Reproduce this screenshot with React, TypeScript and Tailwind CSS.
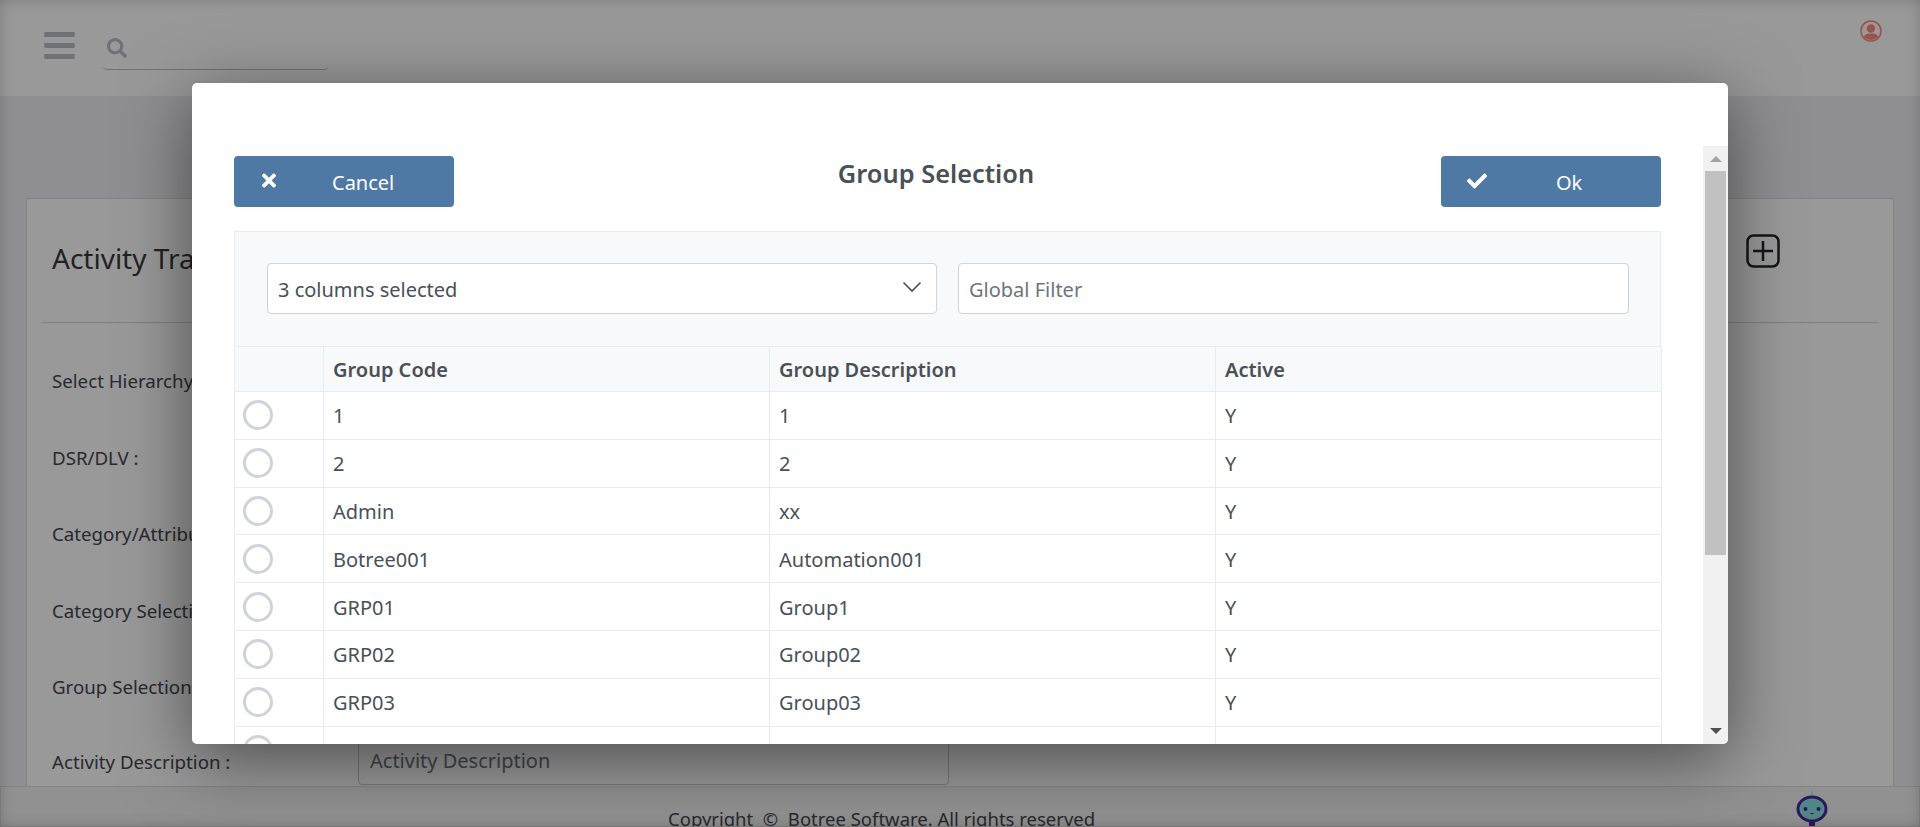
import React from "react";
import { FaBars, FaSearch, FaTimes, FaCheck } from "react-icons/fa";

const rows = [
  ["1", "1", "Y"],
  ["2", "2", "Y"],
  ["Admin", "xx", "Y"],
  ["Botree001", "Automation001", "Y"],
  ["GRP01", "Group1", "Y"],
  ["GRP02", "Group02", "Y"],
  ["GRP03", "Group03", "Y"],
  ["", "", ""],
];

const labels = [
  "Select Hierarchy :",
  "DSR/DLV :",
  "Category/Attribute :",
  "Category Selection :",
  "Group Selection :",
];

function UserIcon() {
  return (
    <svg viewBox="0 0 22 22" className="w-[22px] h-[22px]">
      <defs>
        <clipPath id="uc"><circle cx="11" cy="11" r="9" /></clipPath>
      </defs>
      <circle cx="11" cy="11" r="10" fill="none" stroke="#ff8d7c" strokeWidth="1.600" />
      <g clipPath="url(#uc)" fill="#ff8d7c">
        <circle cx="11" cy="8.500" r="4.200" />
        <path d="M2 22c0-6 3.500-8.500 9-8.500s9 2.500 9 8.500z" />
      </g>
    </svg>
  );
}

function BotIcon() {
  return (
    <svg viewBox="0 0 32 37" className="w-8 h-[37px]">
      <rect x="15.500" y="0" width="1" height="4" fill="#8be0e0" />
      <rect x="13" y="28" width="6" height="9" fill="#47289f" />
      <ellipse cx="16" cy="18" rx="15.500" ry="13.500" fill="#47289f" />
      <ellipse cx="16" cy="18" rx="12.500" ry="10.500" fill="#8be0e0" />
      <circle cx="9.500" cy="18" r="2" fill="#47289f" />
      <circle cx="22.500" cy="18" r="2" fill="#47289f" />
      <path d="M13.500 22c1.500 1.500 3.500 1.500 5 0z" fill="#47289f" />
    </svg>
  );
}

function Page() {
  return (
    <div className="h-[827px] flex flex-col bg-[#eeeef2] text-[#45454f]">
      <header className="h-[96px] shrink-0 bg-white flex items-start justify-between">
        <div className="flex items-start pl-[44px] pt-[33px]">
          <FaBars className="w-[31px] h-[35px] -mt-[5px] text-[#bcbcc8]" />
          <div className="ml-[28px] w-[225px] h-[37px] border-b border-[#bcbcc8] rounded-b-[4px] pl-[4px] pt-[5px]">
            <FaSearch className="w-[20px] h-[20px] text-[#bcbcc8]" />
          </div>
        </div>
        <div className="pt-[20px] pr-[38px]"><UserIcon /></div>
      </header>
      <main className="flex-1 min-h-0 pl-[26px] pt-[102px] pr-[26px] overflow-hidden">
        <div className="h-[600px] bg-white border border-[#dcdcdc] rounded-t-[3px] px-[15px]">
          <div className="h-[124px] border-b border-[#d4d4d4] flex items-center justify-between pb-[5px] pl-[10px] pr-[98px]">
            <h1 className="text-[28px] leading-none text-[#3a3a3a]">Activity Transaction</h1>
            <svg viewBox="0 0 34 34" className="w-[34px] h-[34px] -mt-[15px]" fill="none" stroke="#212529" strokeWidth="2.500">
              <rect x="1.500" y="1.500" width="31" height="31" rx="6" />
              <path d="M7 17h20M17 7v20" />
            </svg>
          </div>
          <div className="pl-[10px] pt-[45px]">
            {labels.map((l) => (
              <div key={l} className="h-[76.500px] text-[18.700px] leading-[26px]">{l}</div>
            ))}
            <div className="flex -mt-[12px]">
              <div className="w-[306px] text-[18.700px] leading-[26px] pt-[10px]">Activity Description :</div>
              <div className="w-[591px] h-[46px] border border-[#c6c8d0] rounded-[4px] px-[11px] pt-[8px] text-[20px] leading-[26px] text-[#6c757d]">Activity Description</div>
            </div>
          </div>
        </div>
      </main>
      <footer className="h-[41px] shrink-0 bg-[#f2f2f2] border border-[#dcdcdc] relative overflow-hidden pl-[667px]">
        <span className="block text-[18.500px] leading-[26px] pt-[19px] whitespace-nowrap">Copyright &nbsp;©&nbsp; Botree Software. All rights reserved</span>
        <div className="absolute left-[1795px] top-[4px]"><BotIcon /></div>
      </footer>
    </div>
  );
}

function Scrollbar() {
  return (
    <div className="w-[25px] mt-[63px] bg-[#f1f1f1] flex flex-col items-center shrink-0">
      <div className="h-[25px] flex items-center justify-center">
        <div className="w-0 h-0 border-x-[6px] border-x-transparent border-b-[6px] border-b-[#a3a3a3]" />
      </div>
      <div className="w-[21px] h-[384px] bg-[#c1c1c1]" />
      <div className="flex-1" />
      <div className="h-[25px] flex items-center justify-center pb-[2px]">
        <div className="w-0 h-0 border-x-[6px] border-x-transparent border-t-[6px] border-t-[#505050]" />
      </div>
    </div>
  );
}

function Modal() {
  return (
    <div className="absolute left-[192px] top-[83px] w-[1536px] h-[661px] bg-white rounded-[5px] overflow-hidden flex shadow-[0_15px_70px_rgba(0,0,0,0.5)]">
      <div className="flex-1 min-w-0 pl-[42px] pr-[42px] pt-[73px] text-[#495057]">
        <div className="flex items-start justify-between h-[75px]">
          <button className="w-[220px] h-[51px] bg-[#4e79a4] rounded-[4px] text-white text-[20px] flex items-center pl-[28px]">
            <FaTimes className="w-[14px] h-[21px] -mt-[2px]" />
            <span className="ml-[57px] pt-[3px] -translate-x-[1px]">Cancel</span>
          </button>
          <h2 className="text-[25.400px] leading-[32px] font-semibold mt-[1px] -ml-[23px]">Group Selection</h2>
          <button className="w-[220px] h-[51px] bg-[#4e79a4] rounded-[4px] text-white text-[20px] flex items-center pl-[26px]">
            <FaCheck className="w-[20px] h-[20px] -mt-[2px]" />
            <span className="ml-[70px] pt-[3px] -translate-x-[1px]">Ok</span>
          </button>
        </div>
        <div className="bg-[#f8f9fa] border border-[#e9ecef] border-b-0 h-[115px] pl-[32px] pr-[31px] pt-[31px] flex gap-[21px]">
          <div className="w-[670px] h-[51px] bg-white border border-[#ced4da] rounded-[4px] flex items-center justify-between px-[10px] text-[20px]">
            <span className="text-[#495057] pt-[3px]">3 columns selected</span>
            <svg viewBox="0 0 20 12" className="w-[20px] h-[12px] mr-[4px] -mt-[4px]" fill="none" stroke="#495057" strokeWidth="1.600"><path d="M1.500 1.500L10 10l8.500-8.500" /></svg>
          </div>
          <div className="flex-1 h-[51px] bg-white border border-[#ced4da] rounded-[4px] flex items-center px-[10px] text-[20px] text-[#6c757d]"><span className="pt-[3px]">Global Filter</span></div>
        </div>
        <table className="w-[1427px] table-fixed border-collapse text-[20px]">
          <colgroup>
            <col className="w-[89px]" />
            <col className="w-[446px]" />
            <col className="w-[446px]" />
            <col className="w-[446px]" />
          </colgroup>
          <thead>
            <tr className="h-[45px] bg-[#f8f9fa]">
              <th className="border border-[#e9ecef]" />
              <th className="border border-[#e9ecef] text-left font-semibold px-[9px] pt-[1px]">Group Code</th>
              <th className="border border-[#e9ecef] text-left font-semibold px-[9px] pt-[1px]">Group Description</th>
              <th className="border border-[#e9ecef] text-left font-semibold px-[9px] pt-[1px]">Active</th>
            </tr>
          </thead>
          <tbody>
            {rows.map((r, i) => (
              <tr key={i} className="h-[47.800px]">
                <td className="border border-[#e9ecef] pl-[8px]">
                  <div className="w-[30px] h-[30px] rounded-full border-[3px] border-[#ced4da] bg-white" />
                </td>
                {r.map((c, j) => (
                  <td key={j} className="border border-[#e9ecef] px-[9px] pt-[2px]">{c}</td>
                ))}
              </tr>
            ))}
          </tbody>
        </table>
      </div>
      <Scrollbar />
    </div>
  );
}

export default function App() {
  return (
    <div className="relative w-[1920px] h-[827px] overflow-hidden font-['Noto_Sans',sans-serif]">
      <Page />
      <div className="absolute inset-0 bg-black/40 shadow-[inset_0_0_14px_rgba(0,0,0,0.2)]" />
      <Modal />
    </div>
  );
}
